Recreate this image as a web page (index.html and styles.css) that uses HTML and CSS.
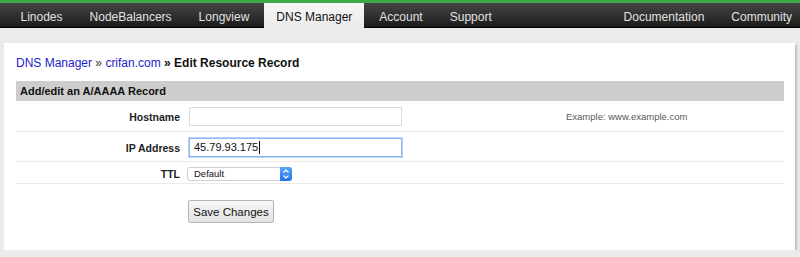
FILE: index.html
```html
<!DOCTYPE html>
<html>
<head>
    <meta charset="UTF-8">
    <title>DNS Manager - Edit Resource Record</title>
    <link rel="stylesheet" href="styles.css">
</head>
<body>
    <div class="topnav">
        <div class="nav-group">
            <a class="nav-tab" href="#">Linodes</a>
            <a class="nav-tab" href="#">NodeBalancers</a>
            <a class="nav-tab" href="#">Longview</a>
            <a class="nav-tab active" href="#">DNS Manager</a>
            <a class="nav-tab" href="#">Account</a>
            <a class="nav-tab" href="#">Support</a>
        </div>
        <div class="nav-group nav-right">
            <a class="nav-tab" href="#">Documentation</a>
            <a class="nav-tab" href="#">Community</a>
        </div>
    </div>

    <div class="page">
        <div class="card">
            <div class="breadcrumb">
                <a href="#">DNS Manager</a> &raquo; <a href="#">crifan.com</a> <b>&raquo; Edit Resource Record</b>
            </div>

            <div class="section-title">Add/edit an A/AAAA Record</div>

            <div class="form-row">
                <label class="field-label" for="hostname">Hostname</label>
                <div class="field"><input class="text-input" id="hostname" type="text"></div>
                <div class="field-hint">Example: www.example.com</div>
            </div>

            <div class="form-row row-focus">
                <label class="field-label">IP Address</label>
                <div class="field">
                    <div class="text-input focused">45.79.93.175<span class="caret"></span></div>
                </div>
                <div class="field-hint"></div>
            </div>

            <div class="form-row row-short">
                <label class="field-label" for="ttl">TTL</label>
                <div class="field">
                    <div class="select-wrap">
                        <select class="select" id="ttl">
                            <option>Default</option>
                        </select>
                        <span class="stepper">
                            <svg width="12" height="14" viewBox="0 0 12 14">
                                <path d="M3.5 5.5 L6 3 L8.5 5.5" fill="none" stroke="#fff" stroke-width="1.2"/>
                                <path d="M3.5 8.5 L6 11 L8.5 8.5" fill="none" stroke="#fff" stroke-width="1.2"/>
                            </svg>
                        </span>
                    </div>
                </div>
                <div class="field-hint"></div>
            </div>

            <div class="button-row">
                <button class="button" type="button">Save Changes</button>
            </div>
        </div>
    </div>
</body>
</html>
```

FILE: styles.css
```css
body {
    margin: 0;
    font-family: "Liberation Sans", Arial, Helvetica, sans-serif;
    background-color: #ebebeb;
    color: #111;
}

/* top navigation */
.topnav {
    display: flex;
    justify-content: space-between;
    height: 24px;
    padding-left: 7px;
    border-top: 3px solid #3fa946;
    border-bottom: 1px solid #000;
    background: linear-gradient(#464646, #1b1b1b);
}

.nav-group {
    display: flex;
}

.nav-tab {
    padding: 6px 13.5px 2px;
    font-size: 12px;
    line-height: 16px;
    color: #e2e2e2;
    text-decoration: none;
}

.nav-right .nav-tab:last-child {
    padding-right: 8px;
}

.nav-tab.active {
    margin: 0 1.5px -1px;
    padding: 6px 12px 3px;
    color: #111;
    background: linear-gradient(#f6f6f6, #ebebeb);
}

/* content */
.page {
    padding: 15px 5px 0 4px;
}

.card {
    background-color: #fff;
    padding: 12px 11px 15px 12px;
    box-shadow: 2px 2px 2px rgba(0, 0, 0, 0.18);
}

.breadcrumb {
    font-size: 12px;
    line-height: 16px;
    color: #333;
}

.breadcrumb a {
    color: #1d1dcb;
    text-decoration: none;
}

.breadcrumb b {
    color: #111;
}

.section-title {
    margin-top: 10px;
    padding-left: 4px;
    background-color: #cdcdcd;
    font-size: 11px;
    font-weight: bold;
    line-height: 20px;
    color: #111;
}

.form-row {
    display: grid;
    grid-template-columns: 164px 370px 1fr;
    column-gap: 8px;
    align-items: center;
    padding: 6px 0 5px;
    border-bottom: 1px solid #ebebeb;
}

.form-row.row-focus {
    padding-bottom: 4px;
}

.form-row.row-short {
    padding: 5px 0 2px;
}

.field-label {
    text-align: right;
    font-size: 10.5px;
    font-weight: bold;
    color: #222;
}

.field {
    display: flex;
}

.text-input {
    box-sizing: border-box;
    width: 213px;
    height: 19px;
    margin: 0 0 0 1px;
    padding: 0 4px;
    border: 1px solid #dcdcdc;
    font-family: inherit;
    font-size: 11px;
    line-height: 17px;
    color: #111;
    background: #fff;
}

.text-input.focused {
    display: flex;
    align-items: center;
    border-color: #8db7ee;
    box-shadow: 0 0 0 1px #b7d3fb;
}

.caret {
    width: 1px;
    height: 13px;
    margin-left: 1px;
    background: #111;
}

.field-hint {
    font-size: 9.5px;
    color: #5a5a5a;
}

.select-wrap {
    position: relative;
    display: flex;
}

.select {
    appearance: none;
    -webkit-appearance: none;
    box-sizing: border-box;
    width: 105px;
    height: 14px;
    margin: 0 0 0 -1px;
    padding: 0 0 0 6px;
    border: 1px solid #cfcfcf;
    border-radius: 3px;
    background: #fff;
    font-family: inherit;
    font-size: 9.5px;
    line-height: 12px;
    color: #111;
}

.stepper {
    position: absolute;
    top: 0;
    right: 0;
    display: flex;
    align-items: center;
    justify-content: center;
    width: 12px;
    height: 14px;
    border-radius: 0 3px 3px 0;
    background: linear-gradient(#5aa5fa, #2173e6);
}

.button-row {
    padding: 16px 0 12px 172px;
}

.button {
    height: 23px;
    width: 86px;
    padding: 0;
    border: 1px solid #b4b4b4;
    border-radius: 2px;
    background: linear-gradient(#f7f7f7, #e2e2e2);
    font-family: inherit;
    font-size: 11.5px;
    white-space: nowrap;
    color: #111;
}
```
